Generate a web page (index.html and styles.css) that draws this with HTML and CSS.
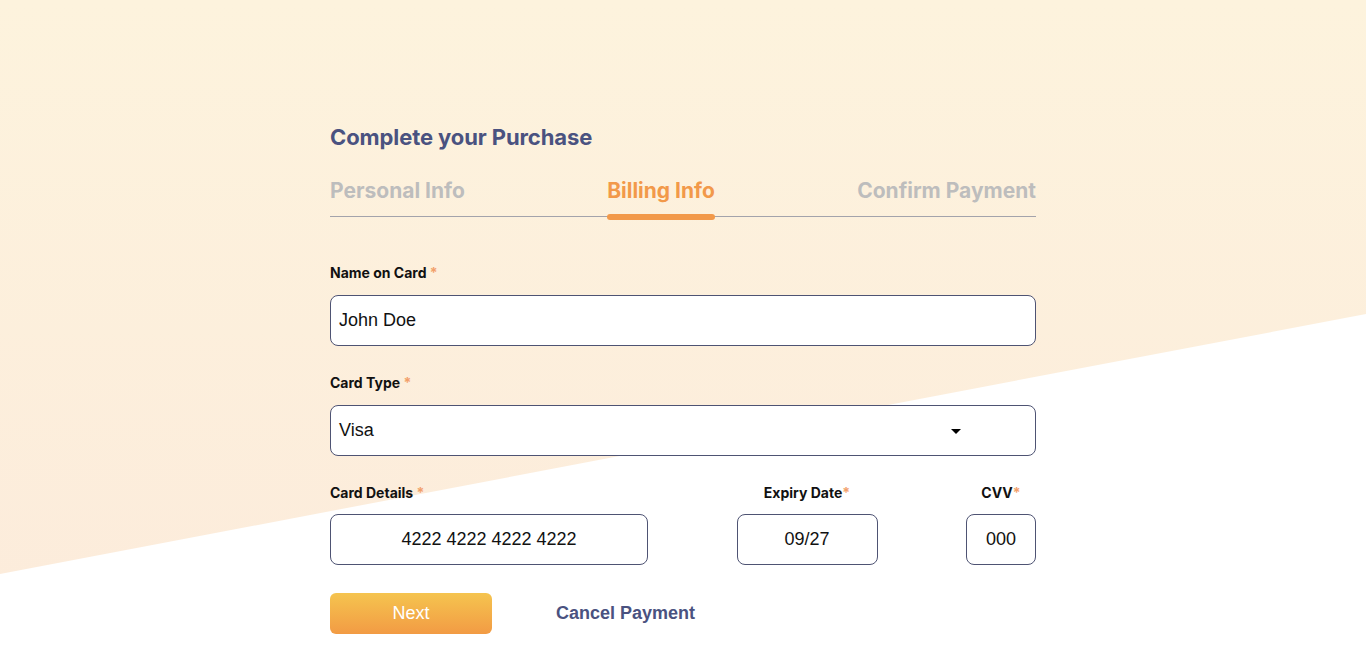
FILE: index.html
```html
<!DOCTYPE html>
<html lang="en">
<head>
<meta charset="utf-8">
<title>Complete your Purchase</title>
<link rel="stylesheet" href="styles.css">
</head>
<body>
<div class="bg"></div>
<main class="checkout">
  <h1 class="title">Complete your Purchase</h1>
  <nav class="steps">
    <span class="step">Personal Info</span>
    <span class="step active">Billing Info</span>
    <span class="step">Confirm Payment</span>
  </nav>

  <form class="form">
    <div class="field">
      <label class="label">Name on Card <span class="req">*</span></label>
      <div class="input">John Doe</div>
    </div>
    <div class="field">
      <label class="label">Card Type <span class="req">*</span></label>
      <div class="input select"><span>Visa</span><span class="caret"></span></div>
    </div>
    <div class="row">
      <div class="field col-card">
        <label class="label">Card Details <span class="req">*</span></label>
        <div class="input center">4222 4222 4222 4222</div>
      </div>
      <div class="field col-exp">
        <label class="label label-center">Expiry Date<span class="req">*</span></label>
        <div class="input center">09/27</div>
      </div>
      <div class="field col-cvv">
        <label class="label label-center">CVV<span class="req">*</span></label>
        <div class="input center">000</div>
      </div>
    </div>
    <div class="actions">
      <button type="button" class="btn-next">Next</button>
      <a class="cancel" href="#">Cancel Payment</a>
    </div>
  </form>
</main>
</body>
</html>
```
FILE: styles.css
```css
html, body {
  margin: 0;
  padding: 0;
}
body {
  background: #ffffff;
  min-height: 661px;
  position: relative;
  overflow: hidden;
  font-family: "Inter", "Noto Sans", sans-serif;
}
.bg {
  position: absolute;
  inset: 0;
  height: 661px;
  background: linear-gradient(180deg, #fdf3dd 0%, #fcebdb 100%);
  clip-path: polygon(0 0, 100% 0, 100% 314px, 0 574px);
  z-index: 0;
}
.checkout {
  position: relative;
  z-index: 1;
  width: 706px;
  margin: 0 auto;
  padding-top: 123px;
}
.title {
  margin: 0;
  font-size: 22px;
  line-height: 28px;
  font-weight: 700;
  color: #4a5280;
  letter-spacing: -0.1px;
}
.steps {
  margin-top: 26px;
  display: flex;
  justify-content: space-between;
  border-bottom: 1px solid #a3a3ab;
  padding-bottom: 11px;
}
.step {
  font-size: 21px;
  line-height: 28px;
  font-weight: 700;
  color: #bdbdbd;
  position: relative;
}
.step.active {
  color: #f2994a;
}
.step.active::after {
  content: "";
  position: absolute;
  left: 0;
  right: 0;
  bottom: -15px;
  height: 6px;
  border-radius: 3px;
  background: #f2994a;
}
.form {
  margin-top: 47px;
}
.field {
  display: flex;
  flex-direction: column;
  margin-bottom: 28px;
}
.label {
  font-size: 14px;
  line-height: 18px;
  font-weight: 700;
  color: #111111;
  margin-bottom: 13px;
}
.row .label {
  margin-bottom: 12px;
}
.label-center {
  text-align: center;
}
.req {
  color: #f2a06a;
}
.input {
  box-sizing: border-box;
  height: 51px;
  background: #ffffff;
  border: 1px solid #4e5373;
  border-radius: 8px;
  padding: 0 8px;
  display: flex;
  align-items: center;
  font-family: "Liberation Sans", Arial, sans-serif;
  font-size: 18px;
  color: #111111;
}
.input.center {
  justify-content: center;
}
.select {
  justify-content: space-between;
}
.caret {
  width: 0;
  height: 0;
  border-left: 5px solid transparent;
  border-right: 5px solid transparent;
  border-top: 5px solid #000000;
  margin-right: 66px;
  margin-top: 2px;
}
.row {
  display: flex;
  justify-content: space-between;
}
.col-card { width: 318px; }
.col-exp { width: 141px; }
.col-cvv { width: 70px; }
.actions {
  display: flex;
  align-items: center;
  gap: 64px;
}
.btn-next {
  width: 162px;
  height: 41px;
  border: none;
  border-radius: 6px;
  background: linear-gradient(180deg, #f5c44f 0%, #f29b44 100%);
  color: #ffffff;
  font-family: "Liberation Sans", Arial, sans-serif;
  font-size: 18px;
  cursor: pointer;
}
.cancel {
  font-family: "Liberation Sans", Arial, sans-serif;
  font-size: 18px;
  font-weight: 700;
  color: #4a5280;
  text-decoration: none;
}
```
